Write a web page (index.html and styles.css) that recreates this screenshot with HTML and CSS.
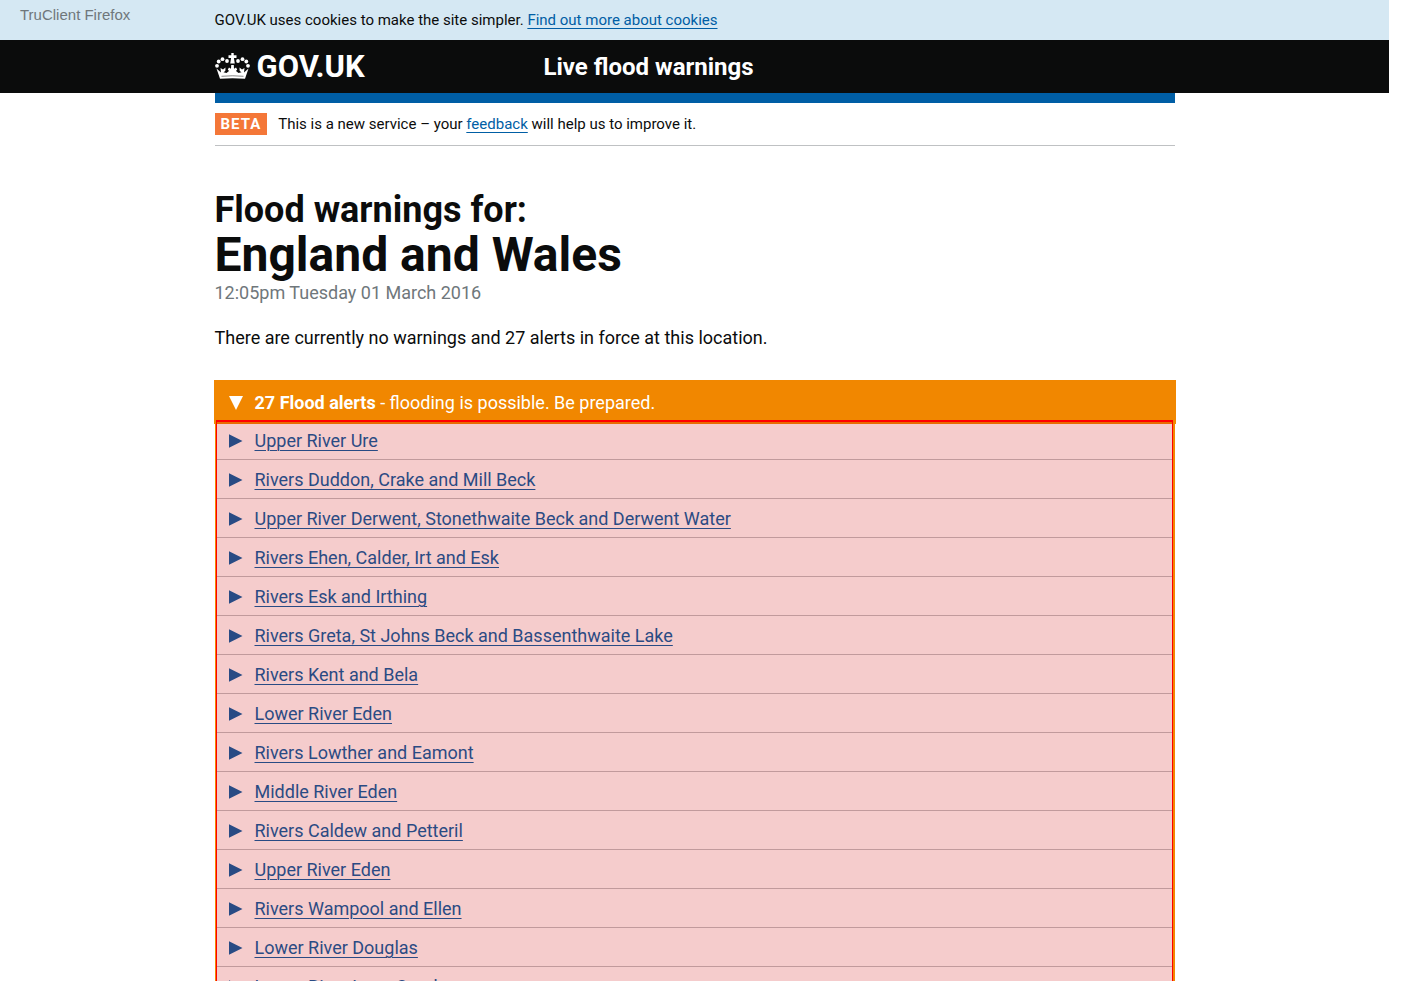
FILE: index.html
```html
<!DOCTYPE html>
<html lang="en">
<head>
<meta charset="utf-8">
<title>Live flood warnings - GOV.UK</title>
<link rel="stylesheet" href="styles.css">
</head>
<body>
<div class="client-label">TruClient Firefox</div>
<div class="cookie-bar">
  <p class="container">GOV.UK uses cookies to make the site simpler. <a href="#cookies">Find out more about cookies</a></p>
</div>
<header class="site-header">
  <div class="container site-header-inner">
    <a class="logo" href="#home">
      <svg class="crown" viewBox="0 0 35 28" aria-hidden="true">
        <g fill="#fff">
          <path d="M16.300 0h2.400v2.300h2.800v2.600h-2.600l.9 5.600h-4.600l.9-5.600h-2.600V2.300h2.800z"/>
          <circle cx="12" cy="8" r="1.900"/><circle cx="23" cy="8" r="1.900"/>
          <circle cx="7.500" cy="6.200" r="1.900"/><circle cx="27.500" cy="6.200" r="1.900"/>
          <circle cx="3.700" cy="8.500" r="1.900"/><circle cx="31.300" cy="8.500" r="1.900"/>
          <circle cx="2" cy="12.800" r="1.900"/><circle cx="33" cy="12.800" r="1.900"/>
          <path d="M1.500 15.500L6 19.500 5.500 15 8 16.500 10.500 14.500 10.300 18 8.500 19.300 11.500 20 14 18 12.800 16.500 14 14.500 16 15.800 16.200 12h2.600L19 15.800 21 14.500 22.200 16.500 21 18 23.500 20 26.500 19.300 24.700 18 24.500 14.500 27 16.500 29.500 15 29 19.500 33.500 15.500 30 25.800Q17.500 24.600 5 25.800z"/>
        </g>
        <path d="M6.500 23.300q11-1.100 22 0" fill="none" stroke="#0b0c0c" stroke-width=".5"/>
      </svg>
      <span>GOV.UK</span>
    </a>
    <a class="service-name" href="#service">Live flood warnings</a>
  </div>
</header>
<main class="container main">
  <div class="phase-banner">
    <strong class="phase-tag">BETA</strong>
    <span>This is a new service – your <a href="#feedback">feedback</a> will help us to improve it.</span>
  </div>
  <h1 class="title"><span class="title-lead">Flood warnings for:</span> <span class="title-place">England and Wales</span></h1>
  <p class="updated">12:05pm Tuesday 01 March 2016</p>
  <p class="summary">There are currently no warnings and 27 alerts in force at this location.</p>
  <section class="alerts">
    <button class="alerts-toggle" type="button" aria-expanded="true">
      <svg class="marker" viewBox="0 0 14 14" aria-hidden="true"><path d="M0 0h14L7 14z" fill="currentColor"/></svg>
      <span><b>27 Flood alerts</b> - flooding is possible. Be prepared.</span>
    </button>
    <div class="alerts-body">
      <ul class="alert-list">
        <li><a href="#a1">Upper River Ure</a></li>
        <li><a href="#a2">Rivers Duddon, Crake and Mill Beck</a></li>
        <li><a href="#a3">Upper River Derwent, Stonethwaite Beck and Derwent Water</a></li>
        <li><a href="#a4">Rivers Ehen, Calder, Irt and Esk</a></li>
        <li><a href="#a5">Rivers Esk and Irthing</a></li>
        <li><a href="#a6">Rivers Greta, St Johns Beck and Bassenthwaite Lake</a></li>
        <li><a href="#a7">Rivers Kent and Bela</a></li>
        <li><a href="#a8">Lower River Eden</a></li>
        <li><a href="#a9">Rivers Lowther and Eamont</a></li>
        <li><a href="#a10">Middle River Eden</a></li>
        <li><a href="#a11">Rivers Caldew and Petteril</a></li>
        <li><a href="#a12">Upper River Eden</a></li>
        <li><a href="#a13">Rivers Wampool and Ellen</a></li>
        <li><a href="#a14">Lower River Douglas</a></li>
        <li><a href="#a15">Lower River Lune Conder</a></li>
      </ul>
      <div class="selection"></div>
    </div>
  </section>
</main>
</body>
</html>
```
FILE: styles.css
```css
* { box-sizing: border-box; }

html { background: #fff; }

body {
  margin: 0 17px 0 0;
  height: 100vh;
  overflow: hidden;
  color: #0b0c0c;
  font: 18px/24px Roboto, "Liberation Sans", sans-serif;
}

p, h1, ul { margin: 0; padding: 0; }

a {
  color: #005ea5;
  text-decoration-thickness: 1px;
  text-underline-offset: 3px;
}

.container {
  max-width: 960px;
  margin: 0 auto;
}

.client-label {
  position: absolute;
  top: 5px;
  left: 20px;
  color: #6f777b;
  font: 15px/20px "Liberation Sans", sans-serif;
}

.cookie-bar {
  padding: 10px 0;
  background: #d5e8f3;
  font-size: 15px;
  line-height: 20px;
}

.site-header { background: #0b0c0c; }

.site-header-inner {
  display: grid;
  grid-template-columns: 329px 1fr;
  align-items: center;
  height: 53px;
}

.site-header a {
  color: #fff;
  text-decoration: none;
  font-weight: 700;
}

.logo {
  display: flex;
  align-items: center;
  gap: 7px;
  font-size: 31px;
}

.crown { width: 35px; height: 28px; }

.service-name { font-size: 24px; }

.main { border-top: 10px solid #005ea5; }

.phase-banner {
  display: flex;
  align-items: center;
  gap: 11px;
  padding: 10px 0;
  border-bottom: 1px solid #bfc1c3;
  font-size: 15px;
  line-height: 22px;
}

.phase-tag {
  padding: 0 6px;
  background: #f47738;
  color: #fff;
  letter-spacing: 1px;
}

.title {
  display: flex;
  flex-direction: column;
  padding-top: 44px;
}

.title-lead { font-size: 36px; line-height: 40px; }
.title-place { font-size: 48px; line-height: 50px; }

.updated {
  padding-top: 1px;
  color: #6f777b;
}

.summary { padding: 21px 0 31px; }

.alerts { border: 2px solid #f18700; }

.alerts-toggle {
  position: relative;
  display: flex;
  align-items: center;
  gap: 12px;
  width: 100%;
  height: 38px;
  padding: 2px 12px 0;
  border: 0;
  outline: 3px solid #f18700;
  background: #f18700;
  color: #fff;
  font: inherit;
  text-align: left;
}

.marker { width: 14px; height: 14px; }

.alerts-body { position: relative; }

.alert-list { list-style: none; }

.alert-list li {
  display: flex;
  align-items: center;
  gap: 12px;
  height: 39px;
  padding: 2px 12px 0;
  border-bottom: 1px solid #bfc1c3;
}

.alert-list li::before {
  content: "";
  width: 14px;
  height: 14px;
  background: #005ea5;
  clip-path: polygon(0 0, 100% 50%, 0 100%);
}

.selection {
  position: absolute;
  inset: -1px 0 0 -1px;
  border: 1px solid #f00;
  border-top-width: 2px;
  background: rgba(204, 0, 0, 0.2);
  pointer-events: none;
}
```
